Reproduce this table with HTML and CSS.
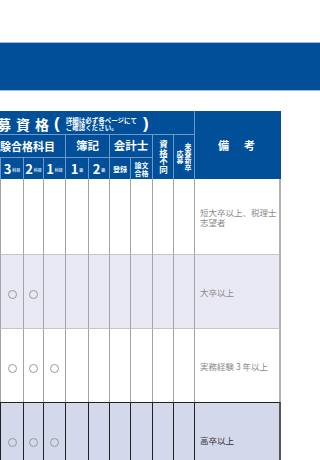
FILE: index.html
```html
<!DOCTYPE html>
<html lang="ja">
<head>
    <meta charset="UTF-8">
    <meta name="viewport" content="width=device-width, initial-scale=1.0">
    <title>応募資格一覧</title>
    <link rel="stylesheet" href="styles.css">
</head>
<body>
    <div class="site-head"></div>
    <div class="banner"></div>

    <div class="boshu">
        <table class="shikaku">
            <colgroup>
                <col class="w22"><col class="w21">
                <col class="w23"><col class="w20"><col class="w22">
                <col class="w23"><col class="w21">
                <col class="w21"><col class="w22">
                <col class="w21"><col class="w21">
                <col class="w87">
            </colgroup>
            <thead>
                <tr class="h-title">
                    <th colspan="11" class="title">
                        <span class="title-main">応募資格</span><span class="paren">(</span><span class="title-note">詳細は必ず各ページにて<br>ご確認ください。</span><span class="paren">)</span>
                    </th>
                    <th rowspan="3" class="biko">備　考</th>
                </tr>
                <tr class="h-group">
                    <th colspan="5" class="group kamoku">試験合格科目</th>
                    <th colspan="2" class="group">簿記</th>
                    <th colspan="2" class="group">会計士</th>
                    <th rowspan="2" class="tate"><span>資格不同</span></th>
                    <th rowspan="2" class="tate tate-s"><span>来春新卒<br>応募</span></th>
                </tr>
                <tr class="h-sub">
                    <th>5<small>科目</small></th>
                    <th>4<small>科目</small></th>
                    <th class="edge">3<small>科目</small></th>
                    <th>2<small>科目</small></th>
                    <th>1<small>科目</small></th>
                    <th>1<small>級</small></th>
                    <th>2<small>級</small></th>
                    <th class="word">登録</th>
                    <th class="word">論文<br>合格</th>
                </tr>
            </thead>
            <tbody>
                <tr>
                    <td></td><td></td>
                    <td class="edge"></td><td></td><td></td>
                    <td></td><td></td><td></td><td></td><td></td><td></td>
                    <td class="note">短大卒以上、税理士<br>志望者</td>
                </tr>
                <tr class="alt">
                    <td><span class="maru"></span></td><td><span class="maru"></span></td>
                    <td class="edge"><span class="maru"></span></td><td><span class="maru"></span></td><td></td>
                    <td></td><td></td><td></td><td></td><td></td><td></td>
                    <td class="note">大卒以上</td>
                </tr>
                <tr>
                    <td><span class="maru"></span></td><td><span class="maru"></span></td>
                    <td class="edge"><span class="maru"></span></td><td><span class="maru"></span></td><td><span class="maru"></span></td>
                    <td></td><td></td><td></td><td></td><td></td><td></td>
                    <td class="note">実務経験 3 年以上</td>
                </tr>
                <tr class="sel">
                    <td><span class="maru"></span></td><td><span class="maru"></span></td>
                    <td class="edge"><span class="maru"></span></td><td><span class="maru"></span></td><td><span class="maru"></span></td>
                    <td></td><td></td><td></td><td></td><td></td><td></td>
                    <td class="note">高卒以上</td>
                </tr>
            </tbody>
        </table>
    </div>
</body>
</html>
```

FILE: styles.css
```css
/* ベース */
* {
    box-sizing: border-box;
}

html,
body {
    margin: 0;
    overflow: hidden;
}

body {
    font-family: "Noto Sans CJK JP", "Liberation Sans", sans-serif;
    background: #fff;
    color: #333;
}

/* ヘッダー帯 */
.site-head {
    height: 42px;
}

.banner {
    height: 49px;
    background: #004f98;
    border-top: 1px solid #a3bddf;
    border-bottom: 1px solid #a3bddf;
}

/* 応募資格テーブル（左側は横スクロールで隠れている） */
.boshu {
    margin-top: 20px;
}

.shikaku {
    table-layout: fixed;
    width: 324px;
    margin-left: -43px;
    border-collapse: separate;
    border-spacing: 0;
}

.w20 { width: 20px; }
.w21 { width: 21px; }
.w22 { width: 22px; }
.w23 { width: 23px; }
.w87 { width: 87px; }

.shikaku th {
    padding: 0;
    background: #004f98;
    color: #fff;
    font-weight: bold;
    line-height: 1;
    text-align: center;
    vertical-align: middle;
    border-left: 1px solid #6f97c9;
    border-top: 1px solid #6f97c9;
    white-space: nowrap;
    overflow: hidden;
}

.h-title th {
    height: 23px;
    border-top: none;
}

.h-group th {
    height: 23px;
}

.h-sub th {
    height: 22px;
    font-size: 13px;
}

/* タイトル行 */
.shikaku th.title {
    text-align: left;
    padding-left: 21px;
    border-left: none;
}

.title-main {
    font-size: 14px;
    letter-spacing: 5px;
    vertical-align: middle;
}

.paren {
    font-family: "Liberation Sans", sans-serif;
    font-size: 17px;
    vertical-align: middle;
}

.title-note {
    display: inline-block;
    margin: 0 6px;
    font-size: 6.5px;
    line-height: 7px;
    text-align: left;
    vertical-align: middle;
}

.shikaku th.biko {
    font-size: 11px;
    letter-spacing: 2px;
    border-right: 1px solid #004f98;
}

/* グループ見出し */
.group {
    font-size: 11.5px;
}

.shikaku th.kamoku {
    font-size: 11px;
    text-align: left;
    padding-left: 31px;
}

/* 縦書き見出し */
.tate span {
    display: inline-block;
    writing-mode: vertical-rl;
    font-size: 8.5px;
    line-height: 9px;
}

.tate-s span {
    font-size: 7px;
    line-height: 8px;
    text-align: center;
}

.h-sub small {
    font-size: 4px;
    margin-left: 1px;
    vertical-align: 2px;
    opacity: 0.8;
}

.h-sub th.word {
    font-size: 7px;
    line-height: 8px;
}

/* 本体 */
.shikaku td {
    height: 74px;
    padding: 0;
    text-align: center;
    vertical-align: middle;
    border-left: 1px solid #a3a3a3;
    border-top: 1px solid #c6c6c6;
    background: #fff;
}

.shikaku tbody tr:first-child td {
    height: 75px;
    border-top: none;
}

.shikaku td.note {
    text-align: left;
    padding: 0 0 0 5px;
    font-size: 8.5px;
    line-height: 10px;
    color: #8a8a8a;
    border-right: 2px solid #b0b0b0;
}

.shikaku tr.alt td {
    background: #e9e9f5;
}

.shikaku tr.sel td {
    background: #d3d8ea;
    border-color: #222;
}

.shikaku tr.sel td.note {
    color: #333;
    border-right-color: #555;
}

.maru {
    display: inline-block;
    width: 9px;
    height: 9px;
    border: 1px solid #9a9a9a;
    border-radius: 50%;
    vertical-align: middle;
}
```
